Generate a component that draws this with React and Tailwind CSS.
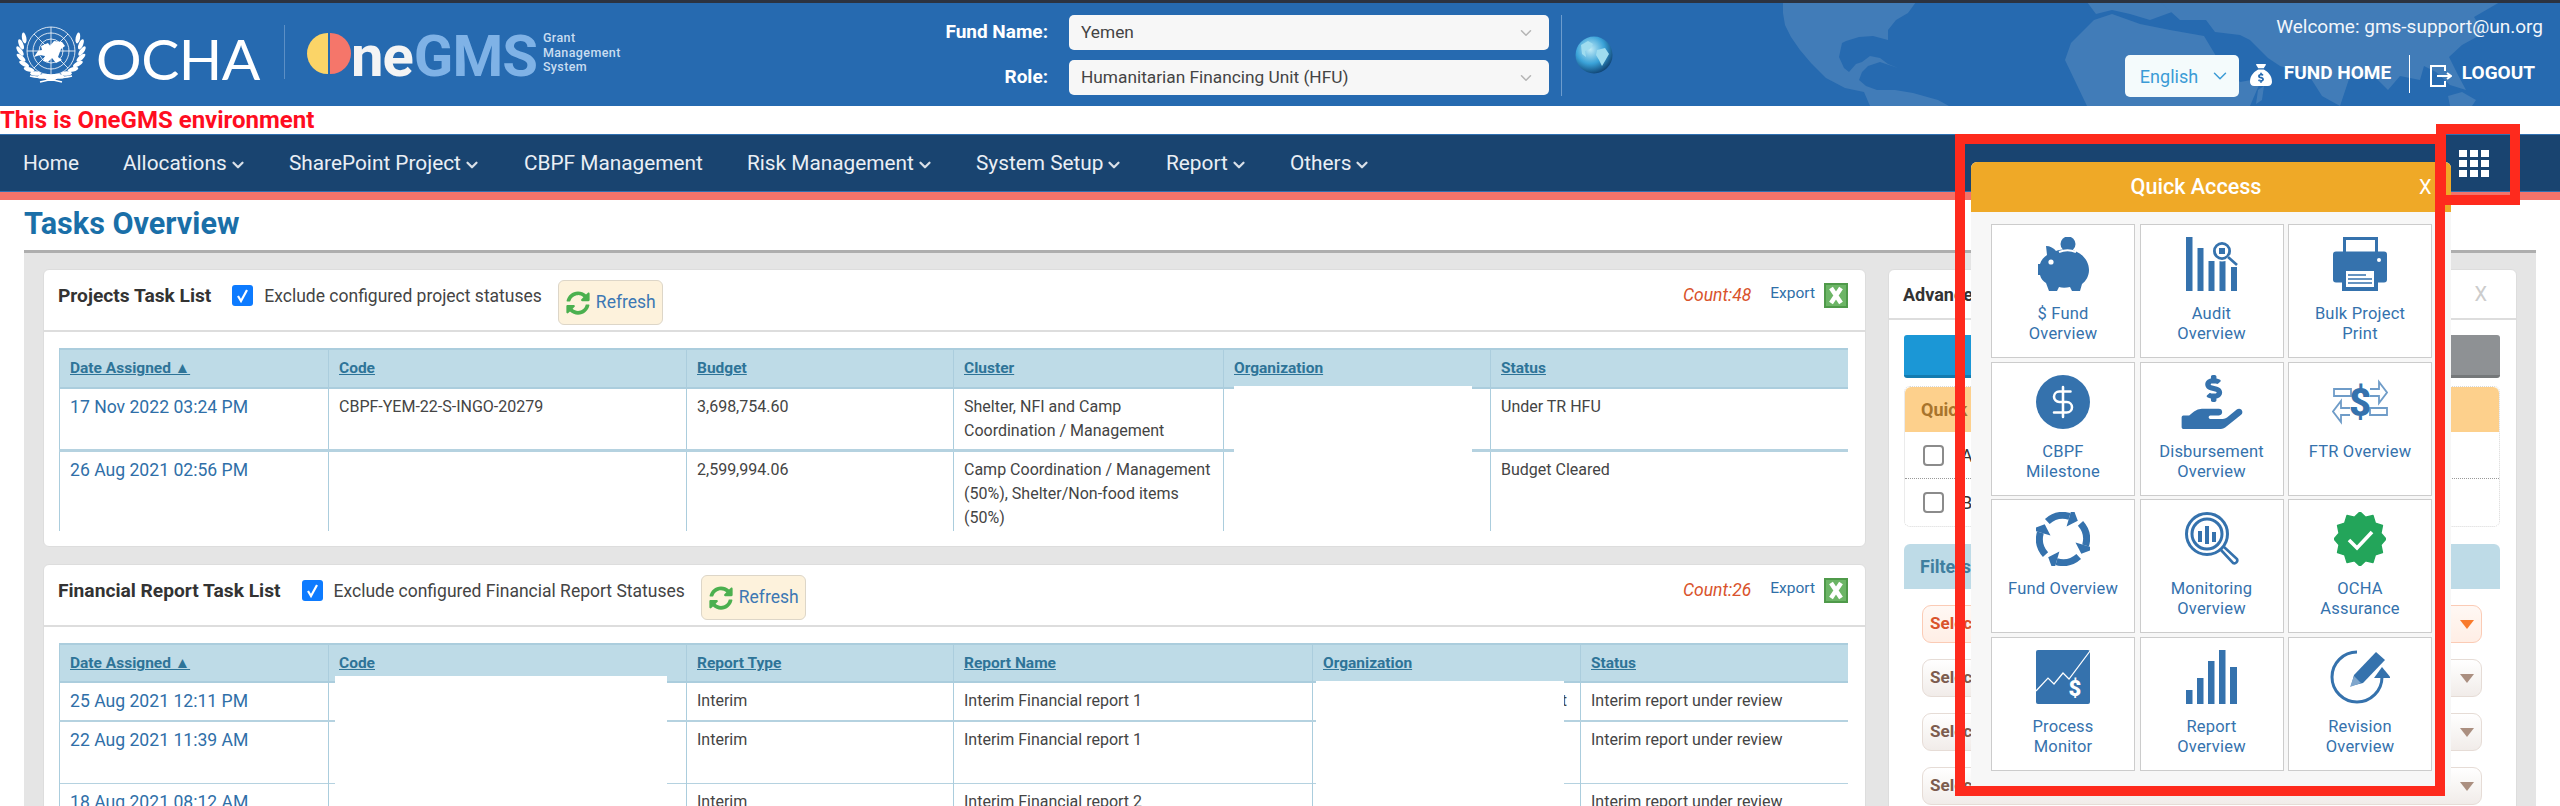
import React from "react";
import { FaHandHoldingUsd, FaSyncAlt } from "react-icons/fa";
import { FaSackDollar as Sack } from "react-icons/fa6";
import { ChevronDown, DollarSign } from "lucide-react";

const B = "#3572ad";

const Piggy = () => (
  <svg width="52" height="54" viewBox="0 0 52 54">
    <circle cx="31" cy="7" r="7.5" fill={B} />
    <path fill={B} d="M9 9c4 0 8 2 10 5 6-2 16-2 21 1 8 4 12 11 12 18 0 6-3 11-7 14l-2 7h-8l-2-4c-4 1-8 1-11 0l-2 4h-8l-3-8c-3-2-5-4-6-8H1v-11h2c1-4 4-7 7-9z" />
    <path d="M22 15c5-2 12-2 17 0" fill="none" stroke="#fff" strokeWidth="2" />
    <circle cx="14" cy="25" r="2.6" fill="#fff" />
  </svg>
);
const Audit = () => (
  <svg width="54" height="54" viewBox="0 0 54 54">
    <g fill={B}>
      <rect x="1" y="0" width="6.5" height="54" />
      <rect x="12.5" y="11" width="6" height="43" />
      <rect x="23.5" y="24" width="6" height="30" />
      <rect x="34.5" y="24" width="6" height="30" />
      <rect x="46" y="30" width="6" height="24" />
    </g>
    <circle cx="37" cy="14" r="10.5" fill="#fff" />
    <circle cx="37" cy="14" r="7.6" fill="none" stroke={B} strokeWidth="2.8" />
    <rect x="34" y="11" width="6" height="6" fill={B} />
    <path d="M43 20l9 8" stroke="#fff" strokeWidth="5" />
    <path d="M43 20l9 8" stroke={B} strokeWidth="2.6" />
  </svg>
);
const Printer = () => (
  <svg width="54" height="54" viewBox="0 0 54 54">
    <rect x="11.5" y="1.5" width="32" height="18" fill="none" stroke={B} strokeWidth="3" />
    <rect x="0" y="14.5" width="54" height="31" rx="3" fill={B} />
    <circle cx="46" cy="23" r="2" fill="#fff" />
    <rect x="9" y="28" width="36" height="26" fill={B} />
    <rect x="13" y="34" width="28" height="16" fill="#fff" />
    <path d="M15 38h18M15 42h24M15 46h24" stroke={B} strokeWidth="1.4" />
  </svg>
);
const Milestone = () => (
  <div className="relative w-[54px] h-[54px] rounded-full bg-[#3572ad] flex items-center justify-center">
    <DollarSign size={36} color="#fff" strokeWidth={1.7} />
  </div>
);
const Ftr = () => (
  <svg width="56" height="54" viewBox="0 0 56 54">
    <g fill="none" stroke="#6f9cc8" strokeWidth="1.8">
      <path d="M2 14h17v7H2z" />
      <path d="M38 14h9V7l8 10.5L47 28v-7h-9" />
      <path d="M55 33H38v7h17z" />
      <path d="M18 33H9v-7l-8 10.5L9 47v-7h9" />
    </g>
    <text x="28" y="41" textAnchor="middle" fontFamily="Roboto, sans-serif" fontWeight="900" fontSize="38" fill={B}>$</text>
  </svg>
);
const polar = (r, deg) => {
  const a = (deg * Math.PI) / 180;
  return `${(27 + r * Math.sin(a)).toFixed(1)} ${(27 - r * Math.cos(a)).toFixed(1)}`;
};
const Cycle = () => (
  <svg width="54" height="54" viewBox="0 0 54 54" fill="none">
    {[0, 1, 2, 3].map((i) => {
      const s = i * 90 - 42;
      const e = s + 58;
      return (
        <g key={i}>
          <path d={`M${polar(23.5, s)}A23.5 23.5 0 0 1 ${polar(23.5, e)}`} stroke={B} strokeWidth="7" />
          <path d={`M${polar(34, e)}L${polar(23.5, e + 23)}L${polar(13, e)}z`} fill={B} />
        </g>
      );
    })}
  </svg>
);
const Monitoring = () => (
  <svg width="54" height="54" viewBox="0 0 54 54" fill="none">
    <circle cx="22" cy="22" r="20.5" stroke={B} strokeWidth="3" />
    <circle cx="22" cy="22" r="15" stroke={B} strokeWidth="3" />
    <g fill={B}>
      <rect x="13" y="19" width="4" height="11" />
      <rect x="20" y="14" width="4" height="18" />
      <rect x="27" y="20" width="4" height="10" />
    </g>
    <path d="M36 38l12 13a3 3 0 0 0 4-4L39 35" stroke={B} strokeWidth="2.6" />
  </svg>
);
const badgePoints = Array.from({ length: 24 }, (_, i) => {
  const a = (i / 24) * Math.PI * 2;
  const r = i % 2 === 0 ? 27 : 22.5;
  return `${(26 + r * Math.sin(a) * 0.96).toFixed(1)},${(27 - r * Math.cos(a)).toFixed(1)}`;
}).join(" ");
const Badge = () => (
  <svg width="52" height="54" viewBox="0 0 52 54">
    <polygon points={badgePoints} fill="#23a55a" stroke="#23a55a" strokeWidth="1.5" strokeLinejoin="round" />
    <path d="M15 28l8 8 15-16" fill="none" stroke="#fff" strokeWidth="3.6" />
  </svg>
);
const Process = () => (
  <svg width="54" height="54" viewBox="0 0 54 54">
    <rect width="54" height="54" rx="2" fill={B} />
    <path d="M0 41l12-13 6 6 9-11 6 6L54 1" fill="none" stroke="#fff" strokeWidth="1.2" />
    <text x="39" y="46" textAnchor="middle" fontFamily="Roboto, sans-serif" fontWeight="900" fontSize="22" fill="#fff">$</text>
  </svg>
);
const Report = () => (
  <svg width="51" height="54" viewBox="0 0 51 54" fill={B}>
    <rect x="0" y="40" width="6.5" height="14" />
    <rect x="11" y="28" width="6.5" height="26" />
    <rect x="22" y="11" width="6.5" height="43" />
    <rect x="33" y="0" width="6.5" height="54" />
    <rect x="44" y="17" width="7" height="37" />
  </svg>
);
const Revision = () => (
  <svg width="60" height="54" viewBox="0 0 60 54" fill="none">
    <path d="M27 2A25 25 0 1 0 52 27" stroke={B} strokeWidth="3" />
    <path d="M44 28l8-11 9 11z" fill={B} />
    <path d="M21 36l3-11 22-23 9 8-22 23z" fill={B} />
    <path d="M20 37l4-11 7 7z" fill="#7fa6cc" />
  </svg>
);

const tiles = [
  [Piggy, "$ Fund", "Overview"],
  [Audit, "Audit", "Overview"],
  [Printer, "Bulk Project", "Print"],
  [Milestone, "CBPF", "Milestone"],
  [() => <FaHandHoldingUsd size={64} color={B} style={{ height: 54, width: 64 }} />, "Disbursement", "Overview"],
  [Ftr, "FTR Overview"],
  [Cycle, "Fund Overview"],
  [Monitoring, "Monitoring", "Overview"],
  [Badge, "OCHA", "Assurance"],
  [Process, "Process", "Monitor"],
  [Report, "Report", "Overview"],
  [Revision, "Revision", "Overview"],
];

const leaves = Array.from({ length: 9 }, (_, i) => i);
const UNEmblem = () => (
  <svg width="70" height="60" viewBox="0 0 70 60" fill="none">
    <g stroke="#fff" strokeWidth="0.8">
      <circle cx="35" cy="27" r="24" />
      <circle cx="35" cy="27" r="18" />
      <circle cx="35" cy="27" r="12" />
      <circle cx="35" cy="27" r="6" />
      <path d="M35 3v48M11 27h48M18 10l34 34M52 10L18 44" />
    </g>
    <path fill="#fff" d="M25 22l7-3 2 3 4-5 8 1 3 4-4 3-3 8 4 3-6 3-4-5-4 4-5-1 2-5-5-1-6 2 4-6 4-1z" />
    {leaves.map((i) => {
      const a = ((150 + i * 15) * Math.PI) / 180;
      const x = 35 + 31 * Math.cos(a);
      const y = 27 - 26 * Math.sin(a);
      return (
        <g key={i}>
          <ellipse cx={x} cy={y} rx="2.2" ry="5.5" fill="#fff" transform={`rotate(${-10 - i * 13} ${x} ${y})`} />
          <ellipse cx={70 - x} cy={y} rx="2.2" ry="5.5" fill="#fff" transform={`rotate(${10 + i * 13} ${70 - x} ${y})`} />
        </g>
      );
    })}
    <path d="M14 52c8 2 16 2 21 2s13 0 21-2M24 58l22-5M46 58l-22-5" stroke="#fff" strokeWidth="1.6" />
  </svg>
);

const Globe = () => (
  <svg width="38" height="38" viewBox="0 0 38 38">
    <defs>
      <radialGradient id="gl" cx="40%" cy="35%" r="70%">
        <stop offset="0%" stopColor="#bfeaf6" />
        <stop offset="55%" stopColor="#3aa2d8" />
        <stop offset="100%" stopColor="#0b3b6b" />
      </radialGradient>
    </defs>
    <circle cx="19" cy="19" r="18.5" fill="url(#gl)" />
    <path d="M6 9l7-4 5 3-3 5-5 2 1 6-4-3zM22 14l8-2 4 6-4 7-3 5-3-6-3-5z" fill="#9fdcef" />
  </svg>
);

const WorldMap = () => (
  <svg className="absolute left-0 top-0 pointer-events-none" width="2560" height="103" viewBox="0 3 2560 103">
    <g fill="#417cb8">
      <path d="M1783 2H1916L1908 13L1896 20L1888 30L1888 40L1873 36L1859 37L1846 41L1842 43L1839 57L1844 68L1849 72L1856 64L1862 62L1870 56L1880 58L1888 64L1898 68L1880 62L1868 66L1862 72L1859 80L1866 86L1877 90L1895 90L1913 93L1938 100L1949 106H1870L1864 92L1845 88L1826 78L1811 63L1800 50L1791 37L1785 25L1783 13Z" />
      <path d="M2094 20L2112 14L2140 24L2170 30L2204 36L2216 56L2240 82L2262 78L2250 106H2087L2076 83L2065 60L2071 43Z" />
      <path d="M2087 2H2190L2172 12L2150 20L2130 14L2112 10L2096 14Z" />
      <path d="M2160 2H2500L2474 17L2484 33L2462 45L2449 57L2458 75L2466 90L2450 85L2436 72L2424 66L2420 80L2400 76L2388 90L2376 78L2350 76L2340 106L2322 96L2308 74L2280 66L2268 58L2250 40L2240 35L2215 32L2206 20L2180 20Z" />
      <path d="M2448 96L2462 92L2476 100L2472 106H2450ZM2258 90L2264 86L2262 100L2256 104Z" />
    </g>
  </svg>
);

const Refresh = () => (
  <div className="flex items-center gap-[6px] h-[45px] w-[105px] pl-[7px] ml-[16px] mt-[10px] bg-[#fdf2dc] border border-[#ddd6c8] rounded-[6px]">
    <FaSyncAlt size={24} color="#4bb04f" />
    <span className="text-[17.5px] text-[#3c78b4] leading-none">Refresh</span>
  </div>
);

const CheckBox = () => (
  <span className="block w-[21px] h-[21px] rounded-[3px] bg-[#0d7bff] flex items-center justify-center mt-[15px]">
    <svg width="13" height="15" viewBox="0 0 13 15" fill="none"><path d="M2 8l3 5 6-11" stroke="#fff" strokeWidth="2.2" /></svg>
  </span>
);

const Excel = () => (
  <svg width="24" height="25" viewBox="0 0 24 25">
    <rect width="24" height="25" fill="#4f9a4a" />
    <rect x="2" y="2" width="20" height="21" fill="#6cb566" />
    <path d="M7 5l10 15M17 5L7 20" stroke="#fff" strokeWidth="4.5" />
  </svg>
);

const Head = ({ title, label, count }) => (
  <div className="flex items-start h-[62px] pl-[14px] pr-[17px] border-b-2 border-[#dddddd]">
    <span className="text-[19.2px] font-bold text-[#333] mt-[14px] leading-[24px]">{title}</span>
    <span className="ml-[21px]"><CheckBox /></span>
    <span className="ml-[11px] mt-[14px] text-[17.5px] text-[#444] leading-[24px]">{label}</span>
    <Refresh />
    <span className="ml-auto mt-[13px] text-[17.5px] italic text-[#d9532c] leading-[24px]">Count:{count}</span>
    <span className="ml-[19px] mt-[11px] text-[15.5px] text-[#2f6fa8] leading-[24px]">Export</span>
    <span className="ml-[9px] mt-[13px]"><Excel /></span>
  </div>
);

const th = "text-left align-top font-bold text-[15.5px] pl-[10px] pt-[8px] text-[#2e7498] underline border-x border-[#abcddd] leading-[20px]";
const td = "align-top pl-[10px] pr-[2px] pt-[6px] text-[16px] text-[#444] border-x border-[#abcddd] leading-[24px]";
const dateCls = "align-top pl-[10px] pt-[6px] text-[17.6px] text-[#2f6fa8] border-x border-[#abcddd] leading-[24px]";

const NavItem = ({ w, children, drop }) => (
  <span className={`flex items-center mt-[2px] text-[20.8px] text-[#eaeff5] ${w}`}>
    {children}
    {drop && <ChevronDown size={18} strokeWidth={3} className="ml-[2px] mt-[2px] text-[#d8dfe8]" />}
  </span>
);

const Sel = ({ first }) => (
  <div className={`flex items-center justify-between h-[38px] pl-[7px] pr-[7px] rounded-[9px] border ${first ? "border-[#fbcbb5] bg-gradient-to-b from-[#fff8f4] to-[#ffeee5] text-[#d9532c]" : "border-[#e6dcd6] bg-gradient-to-b from-[#ffffff] to-[#f1ece9] text-[#7c5c4e]"}`}>
    <span className="text-[17px] font-bold">Select</span>
    <span className={`w-0 h-0 border-x-[7px] border-x-transparent border-t-[9px] ${first ? "border-t-[#f97a2c]" : "border-t-[#ab8f80]"}`} />
  </div>
);

export default function App() {
  return (
    <div className="relative w-[2560px] h-[806px] overflow-hidden bg-white font-['Roboto',sans-serif]">
      <div className="h-[3px] bg-[#2c3340]" />
      {/* top header */}
      <header className="relative h-[103px] bg-[#266ab0] flex text-white">
        <WorldMap />
        <div className="relative flex items-start w-[928px] flex-none">
          <div className="ml-[16px] mt-[21px]"><UNEmblem /></div>
          <span className="ml-[10px] w-[166px] flex-none mt-[21px] font-['Lato',sans-serif] text-[57px] leading-[68px] tracking-[-0.5px] font-normal">OCHA</span>
          <span className="ml-[22px] mt-[22px] w-px h-[54px] bg-[#5c8fc5]" />
          <div className="ml-[22px] mt-[30px] flex w-[44px] h-[41px] gap-[2px]">
            <span className="w-[21px] h-[41px] rounded-l-full bg-[#fbd467]" />
            <span className="w-[21px] h-[41px] rounded-r-full bg-[#f5766a]" />
          </div>
          <span className="mt-[19px] text-[58px] leading-[68px] font-bold tracking-[-1px] text-[#f4f4f4]">ne</span>
          <span className="ml-[1px] mt-[19px] text-[58px] leading-[68px] font-bold tracking-[-1px] text-[#7fb2e6]">GMS</span>
          <span className="ml-[6px] mt-[28px] text-[12.5px] font-medium leading-[14.5px] tracking-[0.4px] text-[#c9ddf1]">Grant<br />Management<br />System</span>
        </div>
        <div className="relative mt-[12px] w-[621px] flex-none">
          <div className="flex items-center h-[35px]">
            <span className="w-[120px] text-right text-[19px] font-bold">Fund Name:</span>
            <div className="ml-[21px] w-[480px] h-[35px] flex-none bg-[#f7f7f7] rounded-[5px] flex items-center justify-between pl-[12px] pr-[14px] text-[17.3px] text-[#444]">
              Yemen<ChevronDown size={18} className="text-[#b5b5b5]" />
            </div>
          </div>
          <div className="flex items-center h-[35px] mt-[10px]">
            <span className="w-[120px] text-right text-[19px] font-bold">Role:</span>
            <div className="ml-[21px] w-[480px] h-[35px] flex-none bg-[#f7f7f7] rounded-[5px] flex items-center justify-between pl-[12px] pr-[14px] text-[17.3px] text-[#444]">
              Humanitarian Financing Unit (HFU)<ChevronDown size={18} className="text-[#b5b5b5]" />
            </div>
          </div>
        </div>
        <div className="relative ml-[12px] mt-[12px] flex-none flex">
          <span className="w-px h-[81px] bg-[#6d9ccd]" />
          <span className="ml-[13px] mt-[21px]"><Globe /></span>
        </div>
        <div className="relative ml-auto mr-[17px] flex flex-col items-end">
          <div className="mt-[12px] text-[19px] leading-[24px] text-[#f2f6fb]">Welcome: gms-support@un.org</div>
          <div className="mt-[16px] mr-[8px] flex items-start">
            <div className="w-[114px] h-[42px] bg-[#f4fbfc] rounded-[5px] flex items-center justify-between pl-[15px] pr-[8px] text-[18px] text-[#3b9bd6]">
              English<ChevronDown size={22} strokeWidth={1.6} />
            </div>
            <Sack size={22} className="ml-[11px] mt-[9px] text-white" />
            <span className="ml-[12px] w-[108px] whitespace-nowrap mt-[6px] text-[19px] font-bold leading-[24px]">FUND HOME</span>
            <span className="ml-[17px] w-px h-[38px] bg-white" />
            <svg className="ml-[20px] mt-[10px]" width="22" height="22" viewBox="0 0 22 22" fill="none" stroke="#fff" strokeWidth="2">
              <path d="M15 6V1H1v20h14v-5M7 11h13M17 8l4 3-4 3" />
            </svg>
            <span className="ml-[10px] mt-[6px] text-[19px] font-bold leading-[24px]">LOGOUT</span>
          </div>
        </div>
      </header>
      {/* environment */}
      <div className="h-[28px] text-[24px] font-bold leading-[28px] text-[#ff0d1f]">This is OneGMS environment</div>
      {/* nav */}
      <nav className="h-[58px] bg-[#194470] border-y border-[#2f6fb0] flex items-center pl-[23px]">
        <NavItem w="w-[100px]">Home</NavItem>
        <NavItem w="w-[166px]" drop>Allocations</NavItem>
        <NavItem w="w-[235px]" drop>SharePoint Project</NavItem>
        <NavItem w="w-[223px]">CBPF Management</NavItem>
        <NavItem w="w-[229px]" drop>Risk Management</NavItem>
        <NavItem w="w-[190px]" drop>System Setup</NavItem>
        <NavItem w="w-[124px]" drop>Report</NavItem>
        <NavItem w="w-[100px]" drop>Others</NavItem>
        <div className="ml-auto mr-[71px] grid grid-cols-3 gap-[3px]">
          {Array.from({ length: 9 }, (_, i) => <span key={i} className="w-[8px] h-[7px] bg-white" />)}
        </div>
      </nav>
      <div className="h-[8px] bg-[#f4736a]" />
      {/* title */}
      <h1 className="h-[50px] pl-[24px] pt-[6px] text-[30.6px] font-bold leading-[36px] text-[#1a6fa8]">Tasks Overview</h1>
      {/* content */}
      <main className="mx-[24px] border-t-[3px] border-[#aeaeae] bg-[#e5e5e5] pl-[19px] pr-[18px] pt-[16px] flex gap-[22px] h-[600px] items-start">
        <div className="w-[1823px] flex-none flex flex-col gap-[17px]">
          <section className="bg-white rounded-[6px] border border-[#dddddd] h-[278px]">
            <Head title="Projects Task List" label="Exclude configured project statuses" count="48" />
            <div className="relative mt-[16px] ml-[15px] w-[1789px] h-[183px] overflow-hidden">
              <table className="table-fixed border-collapse w-[1789px]">
                <colgroup><col className="w-[269px]" /><col className="w-[358px]" /><col className="w-[267px]" /><col className="w-[270px]" /><col className="w-[267px]" /><col className="w-[358px]" /></colgroup>
                <thead>
                  <tr className="h-[39px] bg-[#bedbe7] border-y-2 border-[#abcddd]">
                    <th className={th}>Date Assigned ▲</th><th className={th}>Code</th><th className={th}>Budget</th><th className={th}>Cluster</th><th className={th}>Organization</th><th className={th}>Status</th>
                  </tr>
                </thead>
                <tbody>
                  <tr className="h-[62px] border-b-[3px] border-[#b5d2e0]">
                    <td className={dateCls}>17 Nov 2022 03:24 PM</td><td className={td}>CBPF-YEM-22-S-INGO-20279</td><td className={td}>3,698,754.60</td><td className={td}>Shelter, NFI and Camp<br />Coordination / Management</td><td className={td}></td><td className={td}>Under TR HFU</td>
                  </tr>
                  <tr className="h-[100px]">
                    <td className={dateCls}>26 Aug 2021 02:56 PM</td><td className={td}></td><td className={td}>2,599,994.06</td><td className={td}>Camp Coordination / Management (50%), Shelter/Non-food items (50%)</td><td className={td}></td><td className={td}>Budget Cleared</td>
                  </tr>
                </tbody>
              </table>
              <div className="absolute left-[1175px] top-[38px] w-[238px] h-[150px] bg-white" />
            </div>
          </section>
          <section className="bg-white rounded-[6px] border border-[#dddddd] h-[400px]">
            <Head title="Financial Report Task List" label="Exclude configured Financial Report Statuses" count="26" />
            <div className="relative mt-[16px] ml-[15px] w-[1789px] h-[200px] overflow-hidden">
              <table className="table-fixed border-collapse w-[1789px]">
                <colgroup><col className="w-[269px]" /><col className="w-[358px]" /><col className="w-[267px]" /><col className="w-[359px]" /><col className="w-[268px]" /><col className="w-[268px]" /></colgroup>
                <thead>
                  <tr className="h-[38px] bg-[#bedbe7] border-y-2 border-[#abcddd]">
                    <th className={th}>Date Assigned ▲</th><th className={th}>Code</th><th className={th}>Report Type</th><th className={th}>Report Name</th><th className={th}>Organization</th><th className={th}>Status</th>
                  </tr>
                </thead>
                <tbody>
                  <tr className="h-[39px] border-b-2 border-[#b5d2e0]">
                    <td className={dateCls}>25 Aug 2021 12:11 PM</td><td className={td}></td><td className={td}>Interim</td><td className={td}>Interim Financial report 1</td><td className={td}><span className="block text-right mr-[11px]">t</span></td><td className={td}>Interim report under review</td>
                  </tr>
                  <tr className="h-[62px] border-b border-[#b5d2e0]">
                    <td className={dateCls}>22 Aug 2021 11:39 AM</td><td className={td}></td><td className={td}>Interim</td><td className={td}>Interim Financial report 1</td><td className={td}></td><td className={td}>Interim report under review</td>
                  </tr>
                  <tr className="h-[62px]">
                    <td className={dateCls}>18 Aug 2021 08:12 AM</td><td className={td}></td><td className={td}>Interim</td><td className={td}>Interim Financial report 2</td><td className={td}></td><td className={td}>Interim report under review</td>
                  </tr>
                </tbody>
              </table>
              <div className="absolute left-[276px] top-[33px] w-[332px] h-[170px] bg-white" />
              <div className="absolute left-[1257px] top-[38px] w-[248px] h-[170px] bg-white" />
            </div>
          </section>
        </div>
        <aside className="w-[629px] flex-none bg-white rounded-[6px] border border-[#dddddd] h-[600px]">
          <div className="h-[50px] border-b-2 border-[#dddddd] flex items-center justify-between pl-[14px] pr-[29px]">
            <span className="text-[18px] font-bold text-[#333]">Advanced Search</span>
            <span className="text-[20px] text-[#cccccc]">X</span>
          </div>
          <div className="pl-[15px] pr-[16px] pt-[15px]">
            <div className="flex gap-[10px]">
              <div className="flex-1 h-[43px] rounded-[3px] bg-[#1b97d6] border-b-[3px] border-[#137bb0]" />
              <div className="flex-1 h-[43px] rounded-[3px] bg-[#8e9194] border-b-[3px] border-[#75787a]" />
            </div>
            <div className="mt-[8px] rounded-[6px] border border-[#d8d8d8] border-dotted h-[141px]">
              <div className="h-[45px] bg-[#fdd08c] rounded-t-[6px] flex items-center pl-[16px] text-[18px] font-bold text-[#a8742c]">Quick</div>
              <div className="h-[47px] border-b border-dotted border-[#999] flex items-center pl-[18px]">
                <span className="w-[21px] h-[21px] rounded-[4px] border-2 border-[#8b8b8b]" />
                <span className="ml-[17px] text-[18px] text-[#333]">A</span>
              </div>
              <div className="h-[47px] flex items-center pl-[18px]">
                <span className="w-[21px] h-[21px] rounded-[4px] border-2 border-[#8b8b8b]" />
                <span className="ml-[17px] text-[18px] text-[#333]">B</span>
              </div>
            </div>
            <div className="mt-[17px] h-[45px] bg-[#bedbe7] rounded-t-[6px] flex items-center pl-[16px] text-[18px] font-bold text-[#3f7f9f]">Filters</div>
            <div className="pt-[16px] pl-[18px] pr-[18px] flex flex-col gap-[16px]">
              <Sel first /><Sel /><Sel /><Sel />
            </div>
          </div>
        </aside>
      </main>
      {/* Quick Access popup */}
      <div className="absolute left-[1971px] top-[162px] w-[480px] h-[624px] bg-[#f7f7f7] rounded-t-[6px]">
        <div className="relative h-[50px] bg-[#efa927] rounded-t-[6px] flex items-center justify-center pr-[30px] text-white">
          <span className="text-[21.6px] font-medium">Quick Access</span>
          <span className="absolute left-[448px] top-[13px] text-[20px] leading-[24px]">X</span>
        </div>
        <div className="grid grid-cols-[144px_144px_144px] gap-x-[4.5px] gap-y-[3.6px] pl-[20px] pt-[12px]">
          {tiles.map(([Icon, a, b]) => (
            <div key={a} className="h-[134px] bg-white border border-[#cccccc] flex flex-col items-center pt-[12px]">
              <div className="h-[54px] flex items-center justify-center"><Icon /></div>
              <div className="mt-[13px] text-center text-[16.5px] leading-[20px] text-[#3572ad] tracking-[0.2px]">{a}<br />{b}</div>
            </div>
          ))}
        </div>
      </div>
      {/* annotation rectangles */}
      <div className="absolute left-[1955px] top-[134px] w-[490px] h-[662px] border-[10px] border-[#fe2a1d]" />
      <div className="absolute left-[2436px] top-[124px] w-[84px] h-[81px] border-[10px] border-[#fe2a1d]" />
    </div>
  );
}
